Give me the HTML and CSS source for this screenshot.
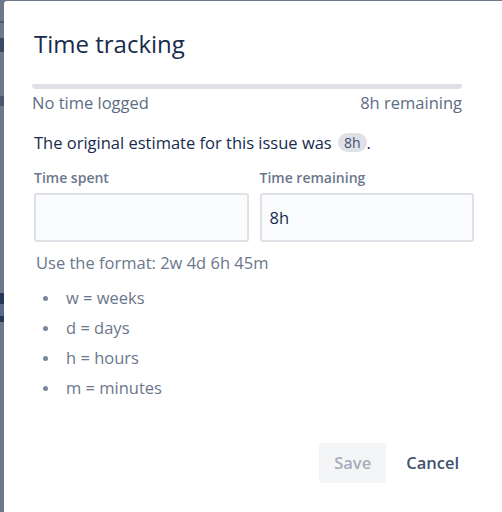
FILE: index.html
```html
<!DOCTYPE html>
<html lang="en">
<head>
<meta charset="utf-8">
<title>Time tracking</title>
<link rel="stylesheet" href="styles.css">
</head>
<body>
<div class="screen">
  <div class="page-edge" aria-hidden="true"></div>
  <section class="modal" role="dialog" aria-labelledby="tt-title">
    <header class="modal-header">
      <h1 id="tt-title" class="modal-title">Time tracking</h1>
    </header>
    <div class="modal-body">
      <div class="tracking">
        <div class="tracking-bar"></div>
        <div class="tracking-meta">
          <span>No time logged</span>
          <span>8h remaining</span>
        </div>
      </div>
      <p class="estimate">The original estimate for this issue was <span class="lozenge">8h</span>.</p>
      <div class="fields">
        <label class="field">
          <span class="field-label">Time spent</span>
          <input class="field-input" type="text" value="">
        </label>
        <label class="field">
          <span class="field-label">Time remaining</span>
          <input class="field-input" type="text" value="8h">
        </label>
      </div>
      <p class="help">Use the format: 2w 4d 6h 45m</p>
      <ul class="units">
        <li>w = weeks</li>
        <li>d = days</li>
        <li>h = hours</li>
        <li>m = minutes</li>
      </ul>
    </div>
    <footer class="modal-footer">
      <button class="btn btn-primary" type="button" disabled>Save</button>
      <button class="btn btn-subtle" type="button">Cancel</button>
    </footer>
  </section>
</div>
</body>
</html>
```
FILE: styles.css
```css
html, body {
  margin: 0;
  padding: 0;
  height: 100%;
  overflow: hidden;
}

body {
  background: #6e788d;
  font-family: "Open Sans", "Noto Sans", Arial, sans-serif;
  color: #172b4d;
}

.screen {
  display: flex;
  align-items: flex-start;
  height: 100%;
}

.page-edge {
  flex: 0 0 4px;
  height: 100%;
  background: linear-gradient(to bottom,
    #6e788d 0, #6e788d 21px,
    #4f5a73 21px, #4f5a73 23px,
    #6e788d 23px, #6e788d 38px,
    #3a4866 38px, #3a4866 52px,
    #6e788d 52px, #6e788d 96px,
    #4a5670 96px, #4a5670 106px,
    #6e788d 106px, #6e788d 293px,
    #26375a 293px, #26375a 304px,
    #5b6a8c 304px, #5b6a8c 316px,
    #26375a 316px, #26375a 322px,
    #6e788d 322px);
}

.modal {
  flex: 0 0 500px;
  margin-top: 1px;
  min-height: 600px;
  background: #ffffff;
  border-radius: 3px 0 0 0;
  box-sizing: border-box;
}

.modal-header {
  padding: 28px 30px 26px;
}

.modal-title {
  margin: 0;
  font-size: 24px;
  line-height: 29px;
  font-weight: 500;
  color: #172b4d;
}

.modal-body {
  padding: 0 30px;
}

.tracking {
  width: 430px;
  margin-left: -2px;
}

.tracking-bar {
  height: 5px;
  background: #dfe1e6;
  border-radius: 0 0 4px 4px;
}

.tracking-meta {
  display: flex;
  justify-content: space-between;
  margin-top: 2px;
  font-size: 16.5px;
  line-height: 24px;
  color: #5e6c84;
}

.estimate {
  margin: 16px 0 0;
  font-size: 16.5px;
  line-height: 24px;
  color: #172b4d;
}

.lozenge {
  display: inline-block;
  padding: 0 6px;
  margin-left: 2px;
  background: #dfe1e6;
  color: #42526e;
  border-radius: 10px;
  font-size: 14px;
  line-height: 19px;
  vertical-align: 1px;
}

.fields {
  display: grid;
  grid-template-columns: 1fr 1fr;
  column-gap: 11px;
  margin-top: 13px;
}

.field {
  display: flex;
  flex-direction: column;
  gap: 5px;
}

.field-label {
  font-size: 14px;
  line-height: 20px;
  font-weight: 600;
  color: #6b778c;
}

.field-input {
  box-sizing: border-box;
  width: 100%;
  height: 49px;
  margin: 0;
  padding: 0 8px;
  border: 2px solid #dfe1e6;
  border-radius: 3px;
  background: #fafbfc;
  font-family: inherit;
  font-size: 16.5px;
  color: #172b4d;
  outline: none;
}

.help {
  margin: 9px 0 0;
  padding-left: 2px;
  font-size: 16.5px;
  line-height: 24px;
  color: #6b778c;
}

.units {
  list-style: none;
  margin: 8px 0 0;
  padding-left: 9px;
  font-size: 16.5px;
  line-height: 30px;
  color: #6b778c;
}

.units li {
  display: flex;
  align-items: center;
}

.units li::before {
  content: "";
  flex: 0 0 5px;
  height: 5px;
  margin-right: 18px;
  margin-top: 1px;
  border-radius: 50%;
  background: #7a869a;
}

.modal-footer {
  display: flex;
  justify-content: flex-end;
  gap: 8px;
  margin-top: 40px;
  padding: 0 33px 0 30px;
}

.btn {
  height: 40px;
  padding: 0 12px;
  border: none;
  border-radius: 3px;
  font-family: inherit;
  font-size: 16.5px;
  font-weight: 600;
  line-height: 40px;
  cursor: pointer;
}

.btn-primary {
  padding: 0 15px;
  background: #f4f5f7;
  color: #a5adba;
  cursor: not-allowed;
}

.btn-subtle {
  background: transparent;
  color: #42526e;
}
```
